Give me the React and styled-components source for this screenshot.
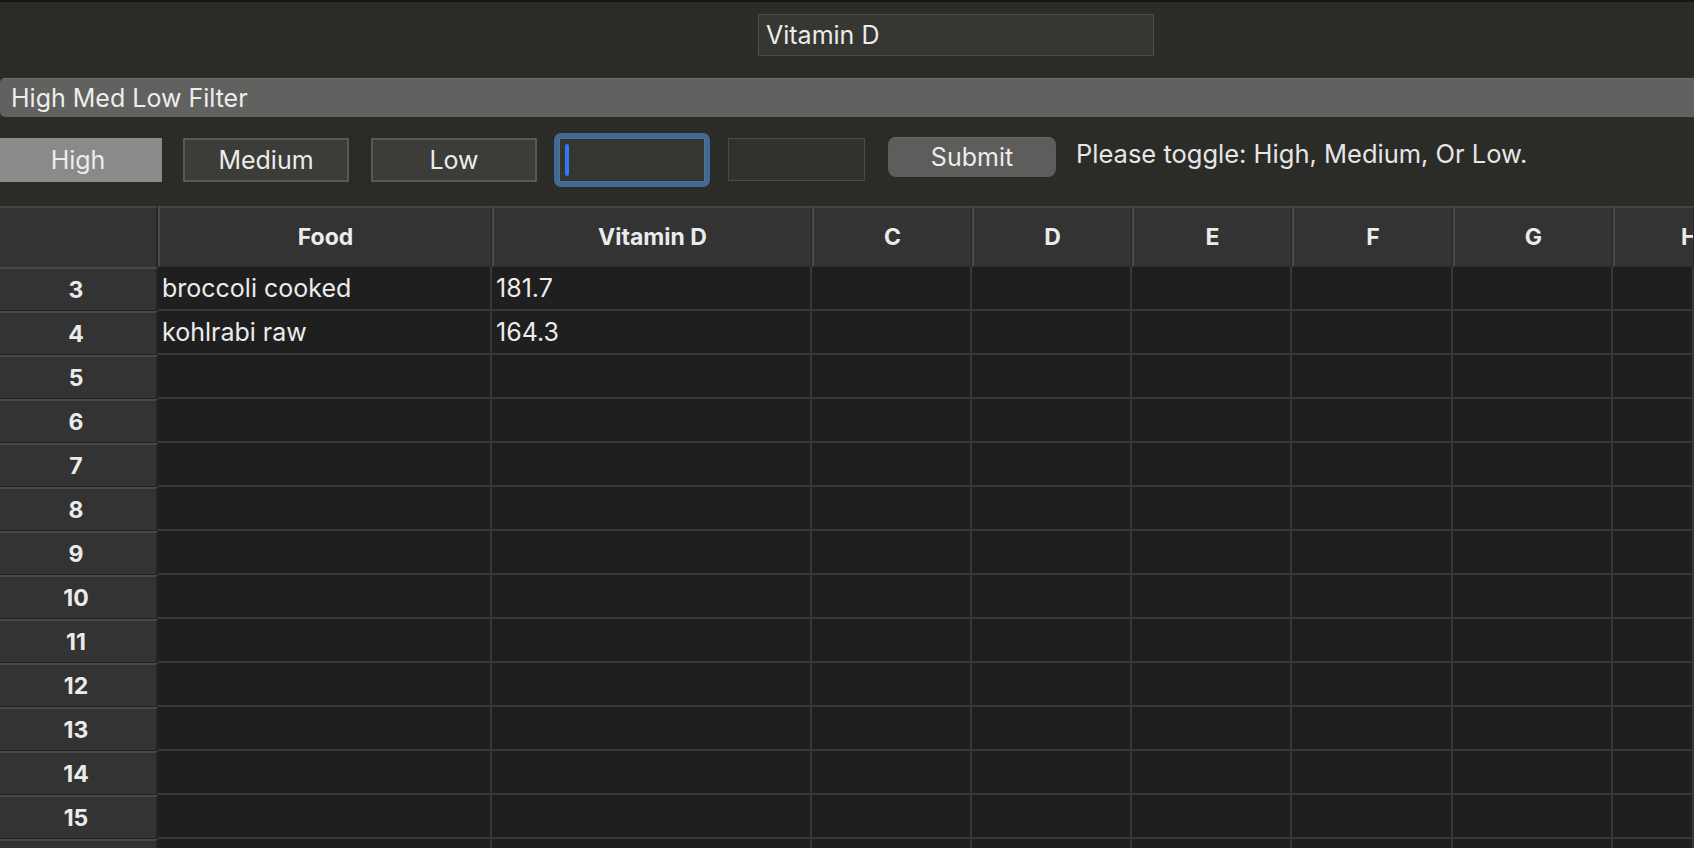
import React from "react";
import styled, { createGlobalStyle } from "styled-components";

const GlobalStyle = createGlobalStyle`
  html, body { margin: 0; padding: 0; }
  body {
    background: #2b2b28;
    font-family: "Inter", "Liberation Sans", sans-serif;
    color: #e9e9e9;
    overflow: hidden;
  }
  * { box-sizing: border-box; }
`;

const Window = styled.div`
  width: 1694px;
  height: 848px;
  border-top: 2px solid #151515;
  display: flex;
  flex-direction: column;
  overflow: hidden;
  & > * { flex-shrink: 0; }
`;

const TitleBar = styled.div`
  height: 76px;
  display: flex;
  align-items: flex-start;
  padding: 12px 0 0 758px;
`;

const TitleField = styled.div`
  width: 396px;
  height: 42px;
  background: #363632;
  border: 1px solid #4b4b47;
  display: flex;
  align-items: center;
  padding-left: 7px;
  font-size: 25px;
  color: #ececec;
`;

const SectionLabel = styled.div`
  height: 39px;
  background: #616160;
  border-top: 1px solid #6c6c6a;
  border-radius: 5px 0 0 5px;
  display: flex;
  align-items: center;
  padding-left: 11px;
  font-size: 25px;
  color: #ededed;
`;

const ControlRow = styled.div`
  height: 89px;
  padding-bottom: 4px;
  display: flex;
  align-items: center;
`;

const Toggle = styled.div`
  width: ${(p) => p.$w}px;
  height: 44px;
  margin-right: ${(p) => p.$gap}px;
  padding-right: ${(p) => (p.$active ? "6px" : "0")};
  background: ${(p) => (p.$active ? "#8a8a89" : "#3c3c39")};
  border: ${(p) => (p.$active ? "none" : "2px solid #585855")};
  display: flex;
  align-items: center;
  justify-content: center;
  font-size: 25px;
  color: #ececec;
`;

const FocusRing = styled.div`
  width: 156px;
  height: 54px;
  margin-right: 18px;
  background: #3f6b98;
  border-radius: 7px;
  padding: 5px;
  display: flex;
`;

const FocusInner = styled.div`
  flex: 1;
  background: #353531;
  border: 1px solid #5e6f80;
  display: flex;
  align-items: center;
  padding-left: 5px;
`;

const Caret = styled.div`
  width: 4px;
  height: 32px;
  border-radius: 2px;
  background: #2f7bf5;
`;

const PlainField = styled.div`
  width: 137px;
  height: 43px;
  margin-right: 23px;
  background: #31312e;
  border: 1px solid #4a4a47;
`;

const SubmitButton = styled.div`
  width: 168px;
  height: 40px;
  margin-right: 20px;
  margin-top: -6px;
  background: #5d5d5b;
  border-radius: 8px;
  border-top: 1px solid #6b6b69;
  display: flex;
  align-items: center;
  justify-content: center;
  font-size: 25px;
  color: #ececec;
`;

const Hint = styled.div`
  font-size: 25.5px;
  color: #e6e6e6;
  margin-top: -12px;
`;

const Sheet = styled.div`
  display: grid;
  grid-template-columns: 158px 334px 320px 160px 160px 160px 161px 160px 81px;
  grid-auto-rows: 44px;
  grid-template-rows: 61px;
  background: #1f1f1f;
`;

const Corner = styled.div`
  background: #333333;
  border-top: 2px solid #454545;
  border-right: 2px solid #242424;
`;

const ColHead = styled.div`
  background: #333333;
  border-top: 2px solid #454545;
  border-left: 2px solid #4a4a4a;
  border-right: 1px solid #262626;
  border-bottom: 1px solid #2a2a2a;
  display: flex;
  align-items: center;
  justify-content: ${(p) => (p.$clip ? "flex-start" : "center")};
  padding-left: ${(p) => (p.$clip ? "66px" : "0")};
  font-size: 23px;
  font-weight: 700;
  color: #ebebeb;
  white-space: nowrap;
  overflow: hidden;
`;

const RowHead = styled.div`
  background: #333333;
  border-top: 2px solid #484848;
  border-bottom: 1px solid #222;
  border-right: 2px solid #242424;
  display: flex;
  align-items: center;
  justify-content: center;
  padding-right: 4px;
  font-size: 23px;
  font-weight: 700;
  color: #ebebeb;
`;

const Cell = styled.div`
  background: #1f1f1f;
  border-right: 2px solid #383838;
  border-bottom: 2px solid #383838;
  display: flex;
  align-items: center;
  padding-left: 4px;
  font-size: 25px;
  color: #ececec;
  white-space: nowrap;
  overflow: hidden;
`;

const columns = ["Food", "Vitamin D", "C", "D", "E", "F", "G", "H"];
const data = {
  3: ["broccoli cooked", "181.7"],
  4: ["kohlrabi raw", "164.3"],
};
const rows = Array.from({ length: 13 }, (_, i) => i + 3);

export default function App() {
  return (
    <>
      <GlobalStyle />
      <Window>
        <TitleBar>
          <TitleField>Vitamin D</TitleField>
        </TitleBar>
        <SectionLabel>High Med Low Filter</SectionLabel>
        <ControlRow>
          <Toggle $active $w={162} $gap={21}>High</Toggle>
          <Toggle $w={166} $gap={22}>Medium</Toggle>
          <Toggle $w={166} $gap={17}>Low</Toggle>
          <FocusRing>
            <FocusInner>
              <Caret />
            </FocusInner>
          </FocusRing>
          <PlainField />
          <SubmitButton>Submit</SubmitButton>
          <Hint>Please toggle: High, Medium, Or Low.</Hint>
        </ControlRow>
        <Sheet>
          <Corner />
          {columns.map((c) => (
            <ColHead key={c} $clip={c === "H"}>{c}</ColHead>
          ))}
          {rows.map((r) => (
            <React.Fragment key={r}>
              <RowHead>{r}</RowHead>
              {columns.map((c, ci) => (
                <Cell key={c}>{data[r] && ci < 2 ? data[r][ci] : ""}</Cell>
              ))}
            </React.Fragment>
          ))}
          <RowHead />
          {columns.map((c) => (
            <Cell key={c} />
          ))}
        </Sheet>
      </Window>
    </>
  );
}
